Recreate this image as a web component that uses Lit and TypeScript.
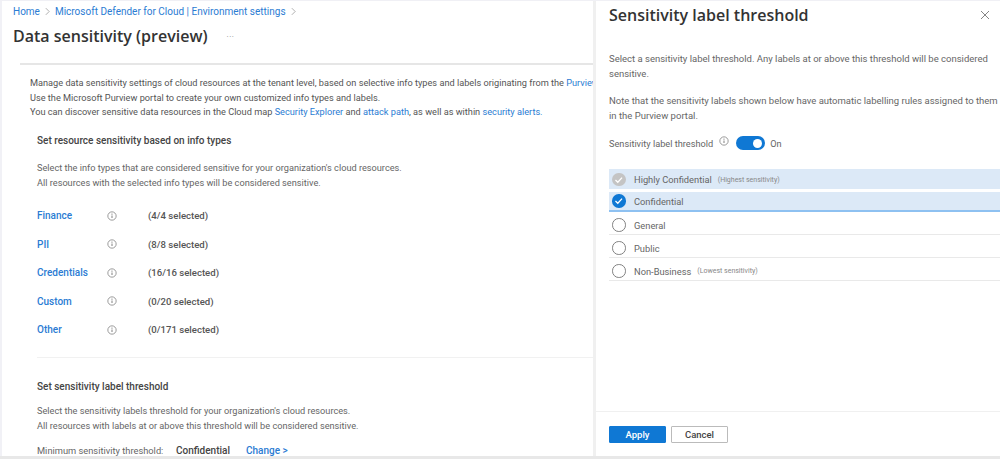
import { LitElement, html, css, svg } from "lit";
import { customElement } from "lit/decorators.js";

const infoIcon = svg`<svg class="info" viewBox="0 0 12 12" aria-hidden="true">
    <circle cx="6" cy="6" r="5" fill="none" stroke="#7a7a7a" stroke-width="0.9" />
    <path d="M6 5.4v3" stroke="#666" stroke-width="1" />
    <circle cx="6" cy="3.7" r="0.65" fill="#666" />
</svg>`;

const infoTypes = [
    { name: "Finance", count: "(4/4 selected)" },
    { name: "PII", count: "(8/8 selected)" },
    { name: "Credentials", count: "(16/16 selected)" },
    { name: "Custom", count: "(0/20 selected)" },
    { name: "Other", count: "(0/171 selected)" },
];

const labels = [
    { name: "Highly Confidential", note: "(Highest sensitivity)", state: "locked" },
    { name: "Confidential", note: "", state: "checked" },
    { name: "General", note: "", state: "" },
    { name: "Public", note: "", state: "" },
    { name: "Non-Business", note: "(Lowest sensitivity)", state: "" },
];

@customElement("app-root")
export class AppRoot extends LitElement {
    private renderMark(state: string) {
        if (!state) {
            return html`<span class="mark"></span>`;
        }
        return html`<span class="mark ${state}">
            <svg viewBox="0 0 14 14" aria-hidden="true">
                <path d="M3.6 7.2l2.4 2.4 4.4-4.8" fill="none" stroke="#fff" stroke-width="1.3" />
            </svg>
        </span>`;
    }

    protected render(): unknown {
        return html`<div class="page">
            <main class="blade">
                <nav class="crumbs">
                    <a>Home</a>
                    <svg class="sep" viewBox="0 0 6 10" aria-hidden="true"><path d="M1 1l4 4-4 4" fill="none" stroke="#888" stroke-width="0.8" /></svg>
                    <a>Microsoft Defender for Cloud | Environment settings</a>
                    <svg class="sep" viewBox="0 0 6 10" aria-hidden="true"><path d="M1 1l4 4-4 4" fill="none" stroke="#888" stroke-width="0.8" /></svg>
                </nav>
                <header class="title-row">
                    <h1>Data sensitivity (preview)</h1>
                    <span class="more">···</span>
                </header>
                <div class="body">
                    <div class="intro">
                        <p>Manage data sensitivity settings of cloud resources at the tenant level, based on selective info types and labels originating from the <a>Purview</a></p>
                        <p>Use the Microsoft Purview portal to create your own customized info types and labels.</p>
                        <p>You can discover sensitive data resources in the Cloud map <a>Security Explorer</a> and <a>attack path</a>, as well as within <a>security alerts.</a></p>
                    </div>
                    <section class="types">
                        <h2>Set resource sensitivity based on info types</h2>
                        <p class="desc">Select the info types that are considered sensitive for your organization's cloud resources.<br />All resources with the selected info types will be considered sensitive.</p>
                        <div class="type-list">
                            ${infoTypes.map(
                                (t) => html`<div class="type-row">
                                    <a class="type-name">${t.name}</a>
                                    <span class="type-info">${infoIcon}</span>
                                    <span class="type-count">${t.count}</span>
                                </div>`,
                            )}
                        </div>
                    </section>
                    <section class="threshold">
                        <h2>Set sensitivity label threshold</h2>
                        <p class="desc">Select the sensitivity labels threshold for your organization's cloud resources.<br />All resources with labels at or above this threshold will be considered sensitive.</p>
                        <div class="minimum">
                            <span class="min-label">Minimum sensitivity threshold:</span>
                            <span class="min-value">Confidential</span>
                            <a class="min-change">Change &gt;</a>
                        </div>
                    </section>
                </div>
            </main>
            <aside class="panel">
                <div class="panel-head">
                    <h2 class="panel-title">Sensitivity label threshold</h2>
                    <svg class="close" viewBox="0 0 10 10" aria-hidden="true">
                        <path d="M1 1l8 8M9 1l-8 8" stroke="#777" stroke-width="0.9" fill="none" />
                    </svg>
                </div>
                <div class="panel-body">
                    <p class="panel-text">Select a sensitivity label threshold. Any labels at or above this threshold will be considered sensitive.</p>
                    <p class="panel-text note">Note that the sensitivity labels shown below have automatic labelling rules assigned to them in the Purview portal.</p>
                    <div class="toggle-row">
                        <span>Sensitivity label threshold</span>
                        <span class="toggle-info">${infoIcon}</span>
                        <span class="toggle"><span class="knob"></span></span>
                        <span>On</span>
                    </div>
                    <div class="label-list">
                        ${labels.map(
                            (l) => html`<div class="label-row ${l.state}">
                                ${this.renderMark(l.state)}
                                <span class="label-name">${l.name}</span>
                                ${l.note ? html`<span class="label-note">${l.note}</span>` : ""}
                            </div>`,
                        )}
                    </div>
                </div>
                <footer class="panel-foot">
                    <button class="btn primary">Apply</button>
                    <button class="btn">Cancel</button>
                </footer>
            </aside>
        </div>`;
    }

    static styles = css`
        :host {
            display: block;
            font-family: Roboto, "Open Sans", sans-serif;
            color: #555;
        }
        * {
            box-sizing: border-box;
        }
        h1,
        h2,
        p {
            margin: 0;
            font-weight: 400;
        }
        a {
            color: #2b7cd3;
        }
        .page {
            display: grid;
            grid-template-columns: 593px 407px;
            height: 459px;
            overflow: hidden;
            background: #fff;
            border-top: 1px solid #f0f0f5;
            border-bottom: 3px solid #e8e8e8;
        }
        .blade {
            overflow: hidden;
            min-width: 0;
            padding-left: 2px;
            border-left: 2px solid #f1f1f6;
        }
        .crumbs {
            display: flex;
            align-items: center;
            gap: 5px;
            height: 20px;
            padding-left: 9px;
            font-size: 10px;
            white-space: nowrap;
        }
        .sep {
            display: block;
            width: 5px;
            height: 9px;
        }
        .title-row {
            display: flex;
            align-items: center;
            gap: 19px;
            height: 28px;
            margin-top: 1px;
            padding-left: 9px;
        }
        h1 {
            font-family: "Open Sans", sans-serif;
            font-size: 16px;
            font-weight: 600;
            color: #333;
            white-space: nowrap;
        }
        .more {
            color: #888;
            font-size: 8px;
            letter-spacing: 0.5px;
        }
        .body {
            margin: 13px 0 0 16px;
            border-top: 2px solid #e6e6e6;
        }
        .intro {
            padding: 11px 0 0 10px;
            font-size: 9.2px;
            line-height: 14.5px;
            white-space: nowrap;
        }
        .types {
            margin: 14px 0 0 17px;
            padding-bottom: 20px;
            border-bottom: 1px solid #f1f1f1;
        }
        .threshold {
            margin: 22px 0 0 17px;
        }
        section h2 {
            font-size: 10px;
            font-weight: 500;
            color: #444;
            line-height: 14px;
        }
        .desc {
            margin-top: 12px;
            font-size: 9.2px;
            line-height: 15px;
            color: #666;
            white-space: nowrap;
        }
        .threshold .desc {
            margin-top: 9px;
        }
        .type-list {
            display: flex;
            flex-direction: column;
            gap: 14.5px;
            margin-top: 19px;
        }
        .type-row {
            display: grid;
            grid-template-columns: 70px 41px 1fr;
            align-items: center;
            height: 14px;
            font-size: 10px;
            font-weight: 500;
        }
        .type-count {
            color: #555;
            font-size: 9.6px;
        }
        .type-name {
            color: #2b7cd3;
        }
        .info {
            display: block;
            width: 10px;
            height: 10px;
        }
        .minimum {
            display: flex;
            align-items: center;
            margin-top: 12px;
            font-size: 10px;
            white-space: nowrap;
        }
        .min-label {
            width: 139px;
            font-size: 9.3px;
            color: #666;
        }
        .min-value {
            width: 70px;
            font-weight: 500;
            color: #444;
        }
        .min-change {
            font-weight: 500;
        }
        .panel {
            display: flex;
            flex-direction: column;
            min-width: 0;
            border-left: 3px solid #f0f0f0;
        }
        .panel-head {
            display: flex;
            align-items: center;
            justify-content: space-between;
            height: 30px;
            padding: 0 10px 2px 13px;
        }
        .panel-title {
            font-family: "Open Sans", sans-serif;
            font-size: 16px;
            font-weight: 600;
            color: #333;
        }
        .close {
            width: 10px;
            height: 10px;
        }
        .panel-body {
            flex: 1;
            padding: 21px 0 0 13px;
        }
        .panel-text {
            font-size: 9.5px;
            line-height: 14.5px;
            color: #666;
            width: 390px;
        }
        .note {
            margin-top: 13px;
        }
        .toggle-row {
            display: flex;
            align-items: center;
            margin-top: 13px;
            height: 14px;
            font-size: 9.2px;
            color: #666;
        }
        .toggle-info {
            margin: -4px 7px 0 6px;
        }
        .toggle {
            display: flex;
            justify-content: flex-end;
            align-items: center;
            width: 29px;
            height: 14px;
            margin-right: 5px;
            padding-right: 3px;
            border-radius: 7px;
            background: #0f78d4;
        }
        .knob {
            width: 9px;
            height: 9px;
            border-radius: 50%;
            background: #fff;
        }
        .label-list {
            display: flex;
            flex-direction: column;
            margin-top: 19px;
        }
        .label-row {
            display: flex;
            align-items: center;
            height: 23px;
            padding: 4px 0 0 3px;
            border-bottom: 1px solid #e9e9e9;
            font-size: 9.3px;
            color: #666;
        }
        .label-row.locked {
            height: 20px;
            margin-bottom: 3px;
            padding-top: 1px;
            border-bottom: 0;
            background: #dce9f7;
        }
        .label-row.checked {
            height: 20px;
            padding-top: 0;
            border-bottom: 2px solid #8ec1f1;
            background: #dce9f7;
        }
        .mark {
            display: block;
            flex: none;
            width: 13.5px;
            height: 13.5px;
            margin-right: 8.5px;
            border: 1px solid #808080;
            border-radius: 50%;
            background: #fff;
        }
        .mark svg {
            display: block;
            width: 100%;
            height: 100%;
        }
        .mark.locked {
            border: 0;
            background: #c4c4c4;
        }
        .mark.checked {
            border: 0;
            background: #0f78d4;
        }
        .label-note {
            margin-left: 6px;
            font-size: 7px;
            color: #888;
        }
        .panel-foot {
            display: flex;
            gap: 5px;
            height: 45px;
            padding: 14px 0 0 13px;
            border-top: 1px solid #f0f0f0;
        }
        .btn {
            width: 57px;
            height: 17px;
            padding: 0;
            border: 1px solid #bbb;
            border-radius: 1px;
            background: #fff;
            color: #444;
            font: 500 9.5px Roboto, sans-serif;
        }
        .btn.primary {
            border-color: #0f78d4;
            background: #0f78d4;
            color: #fff;
        }
    `;
}
